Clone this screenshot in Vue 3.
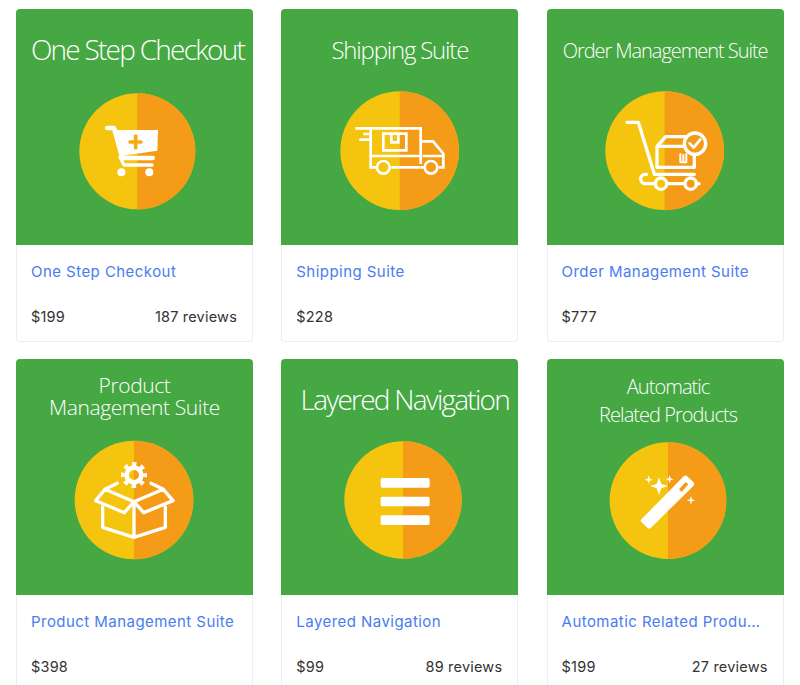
<script setup>
// --- Product data ---
const products = [
  { id: 'checkout', banner: ['One Step Checkout'], size: 'xl shift-s', name: 'One Step Checkout', price: '$199', reviews: '187 reviews' },
  { id: 'shipping', banner: ['Shipping Suite'], size: 'lg', name: 'Shipping Suite', price: '$228', reviews: '' },
  { id: 'order', banner: ['Order Management Suite'], size: 'sm', name: 'Order Management Suite', price: '$777', reviews: '' },
  { id: 'product', banner: ['Product', 'Management Suite'], size: 'md', name: 'Product Management Suite', price: '$398', reviews: '' },
  { id: 'layered', banner: ['Layered Navigation'], size: 'xl shift-l', name: 'Layered Navigation', price: '$99', reviews: '89 reviews' },
  { id: 'wand', banner: ['Automatic', 'Related Products'], size: 'wide shift-s', name: 'Automatic Related Products', price: '$199', reviews: '27 reviews' },
]

// circle centre inside the 420 box, differs a little per banner
const circles = {
  checkout: [217, 214, 174],
  shipping: [209, 212, 178],
  order: [209, 212, 178],
  product: [207, 210, 178],
  layered: [219, 210, 176],
  wand: [219, 212, 175],
}
</script>

<template>
  <div class="grid">
    <div v-for="p in products" :key="p.id" class="card">
      <div class="banner">
        <div class="banner-title" :class="p.size">
          <span v-for="line in p.banner" :key="line">{{ line }}</span>
        </div>
        <svg class="badge" width="140" height="140" viewBox="0 0 420 420">
          <circle :cx="circles[p.id][0]" :cy="circles[p.id][1]" :r="circles[p.id][2]" fill="#f4c40f" />
          <path
            :d="`M${circles[p.id][0]} ${circles[p.id][1] - circles[p.id][2]}a${circles[p.id][2]} ${circles[p.id][2]} 0 0 1 0 ${circles[p.id][2] * 2}z`"
            fill="#f49c17"
          />

          <!-- cart with plus -->
          <g v-if="p.id === 'checkout'" transform="translate(15 15)">
            <path d="M112 129H132L157 219H248" fill="none" stroke="#fff" stroke-width="14" stroke-linecap="round" stroke-linejoin="round" />
            <path d="M137 135H264L262 197L153 213Z" fill="#fff" />
            <path d="M150 216L162 240H246" fill="none" stroke="#fff" stroke-width="10" stroke-linecap="round" stroke-linejoin="round" />
            <circle cx="154" cy="262" r="12" fill="#fff" />
            <circle cx="238" cy="262" r="12" fill="#fff" />
            <path d="M180 171H213M197 153V188" stroke="#f4ac14" stroke-width="11" stroke-linecap="round" fill="none" />
          </g>

          <!-- delivery truck -->
          <g v-else-if="p.id === 'shipping'" fill="none" stroke="#fff" stroke-width="8" stroke-linejoin="miter">
            <path d="M76 145H272V252M100 162H122M88 179H122M122 145V262H138M184 262H272" />
            <path d="M272 184H309L340 221V262H327M281 262H272M278 228H340" />
            <path d="M160 161H229V211H160ZM184 161V187H205V161" />
            <path d="M122 228H272" />
            <circle cx="160" cy="262" r="19" />
            <circle cx="303" cy="262" r="19" />
          </g>

          <!-- cart with box and check -->
          <g v-else-if="p.id === 'order'" fill="none" stroke="#fff" stroke-width="10" stroke-linecap="round" stroke-linejoin="round">
            <path d="M96 127H130L178 283H298M155 283H151A14 14 0 0 0 151 311H178M218 311H268M306 311H312" />
            <circle cx="198" cy="311" r="17" />
            <circle cx="287" cy="311" r="17" />
            <path d="M186 199V262H298V222M186 199L212 170H272M186 199H272" />
            <path d="M256 222V247H274V222M265 225V245" stroke-width="6" />
            <circle cx="300" cy="191" r="32" fill="#f49c17" />
            <path d="M284 190L296 203L316 178" stroke-width="8" />
          </g>

          <!-- open box with gear -->
          <g v-else-if="p.id === 'product'" fill="none" stroke="#fff" stroke-width="10" stroke-linecap="round" stroke-linejoin="round">
            <path d="M207 215V320M113 231V292L207 322L301 292V231" />
            <path d="M207 215L120 178L92 212L178 248ZM207 215L295 178L324 212L236 248Z" />
            <path d="M120 178L157 160M295 178L258 160" />
            <circle cx="207" cy="135" r="22" stroke-width="14" />
            <circle cx="207" cy="135" r="33" stroke-width="12" stroke-linecap="butt" pathLength="80" stroke-dasharray="5 5" stroke-dashoffset="2.5" />
          </g>

          <!-- layered lines -->
          <g v-else-if="p.id === 'layered'" fill="#fff">
            <rect x="152" y="144" width="147" height="29" rx="5" />
            <rect x="152" y="200" width="147" height="29" rx="5" />
            <rect x="152" y="256" width="147" height="29" rx="5" />
          </g>

          <!-- magic wand -->
          <g v-else transform="translate(12 0)">
            <path d="M127 268L254 139Q260 134 266 140L283 156Q288 162 283 168L156 293Q151 298 145 293L127 276Q123 272 127 268Z" fill="#fff" />
            <path d="M240 178L260 156L268 163L248 186Z" fill="#f49c17" />
            <path d="M180 142L187 162L207 168L187 175L180 195L173 175L153 168L173 162ZM149 136L152 146L161 149L152 152L149 161L146 152L137 149L146 146ZM212 136L215 145L224 148L215 151L212 160L209 151L200 148L209 145ZM276 198L279 208L289 211L279 214L276 224L273 214L263 211L273 208Z" fill="#fff" />
          </g>
        </svg>
      </div>
      <div class="body">
        <a class="name" href="#">{{ p.name }}</a>
        <div class="meta">
          <span>{{ p.price }}</span>
          <span v-if="p.reviews">{{ p.reviews }}</span>
        </div>
      </div>
    </div>
  </div>
</template>

<style>
html, body {
  margin: 0;
  height: 685px;
  overflow: hidden;
  background: #fff;
}
</style>

<style scoped>
.grid {
  display: grid;
  grid-template-columns: repeat(3, 237px);
  column-gap: 28.3px;
  row-gap: 17px;
  padding: 9px 0 0 16px;
  font-family: Inter, "Liberation Sans", sans-serif;
}

.card {
  height: 333px;
  background: #fff;
}

.banner {
  height: 236px;
  border-radius: 4px 4px 0 0;
  background: #46a843;
  display: flex;
  flex-direction: column;
  align-items: center;
}

.banner-title {
  box-sizing: border-box;
  width: 100%;
  height: 71px;
  padding-top: 10px;
  flex-shrink: 0;
  display: flex;
  flex-direction: column;
  align-items: center;
  justify-content: center;
  color: #fff;
  font-family: "Open Sans", sans-serif;
  font-weight: 300;
  white-space: nowrap;
}

.banner-title.xl { font-size: 28px; letter-spacing: -1.75px; padding-top: 8px; }
.banner-title.lg { font-size: 24px; letter-spacing: -1.2px; }
.banner-title.md { font-size: 21px; letter-spacing: -0.4px; line-height: 22px; padding-top: 2px; }
.banner-title.wide { font-size: 20px; letter-spacing: -0.95px; line-height: 28px; padding-top: 12px; }
.banner-title.sm { font-size: 20px; letter-spacing: -1.05px; padding-top: 12px; }
.banner-title.shift-s { padding-left: 6px; }
.banner-title.shift-l { padding-left: 10px; }

.badge {
  display: block;
  flex-shrink: 0;
}

.body {
  box-sizing: border-box;
  height: 97px;
  padding: 17px 15px 0 14px;
  border: 1px solid #eceef2;
  border-top: 0;
  border-radius: 0 0 4px 4px;
}

.name {
  display: block;
  height: 20px;
  line-height: 20px;
  padding-right: 1px;
  font-size: 15px;
  letter-spacing: 0.45px;
  color: #4a7cf0;
  text-decoration: none;
  white-space: nowrap;
  overflow: hidden;
  text-overflow: ellipsis;
}

.meta {
  margin-top: 25px;
  display: flex;
  justify-content: space-between;
  line-height: 20px;
  font-size: 14.5px;
  letter-spacing: 0.2px;
  color: #333;
}
</style>
